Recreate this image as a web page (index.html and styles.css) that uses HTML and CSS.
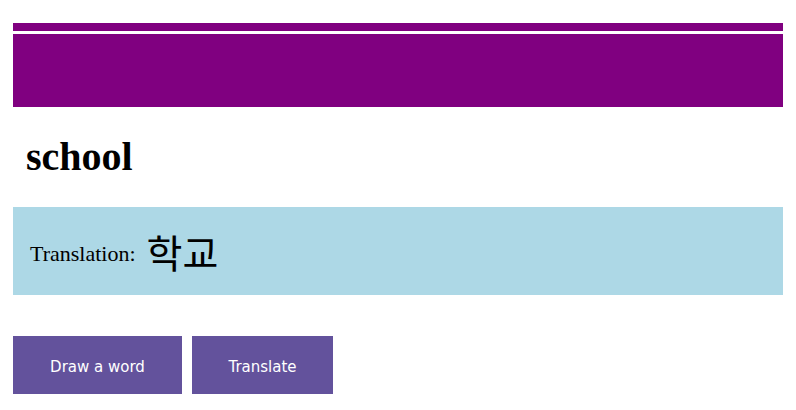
FILE: index.html
```html
<!DOCTYPE html>
<html>
<head>
<meta charset="utf-8">
<link rel="stylesheet" href="styles.css">
</head>
<body>
<div class="page">
  <header class="banner">
    <div class="banner-top"></div>
    <div class="banner-main"></div>
  </header>
  <h1 class="word">school</h1>
  <section class="translation">
    <span class="label">Translation:</span>
    <span class="korean">학교</span>
  </section>
  <div class="actions">
    <button class="btn btn-draw">Draw a word</button>
    <button class="btn btn-translate">Translate</button>
  </div>
</div>
</body>
</html>
```

FILE: styles.css
```css
html, body {
  margin: 0;
  padding: 0;
  background: #ffffff;
}
.page {
  padding: 23px 13px 0 13px;
  font-family: "Liberation Serif", "Times New Roman", serif;
  color: #000;
}
.banner {
  display: flex;
  flex-direction: column;
}
.banner-top {
  height: 8px;
  background: #800080;
  border-bottom: 3px solid #ffffff;
}
.banner-main {
  height: 73px;
  background: #800080;
}
.word {
  margin: 0;
  padding: 0 0 0 13px;
  height: 100px;
  display: flex;
  align-items: center;
  font-size: 40px;
  font-weight: bold;
  line-height: 1;
}
.translation {
  background: #add8e6;
  height: 88px;
  display: flex;
  align-items: center;
  padding-left: 17px;
  gap: 11px;
}
.label {
  font-size: 22px;
  position: relative;
  top: 3px;
}
.korean {
  font-family: "Noto Sans CJK KR", sans-serif;
  font-size: 39px;
  line-height: 1;
}
.actions {
  display: flex;
  gap: 10px;
  margin-top: 41px;
}
.btn {
  height: 58px;
  border: none;
  background: #63529c;
  color: #ffffff;
  font-family: "DejaVu Sans", sans-serif;
  font-size: 15px;
  padding: 3px 0 0 0;
}
.btn-draw { width: 169px; }
.btn-translate { width: 141px; }
```
